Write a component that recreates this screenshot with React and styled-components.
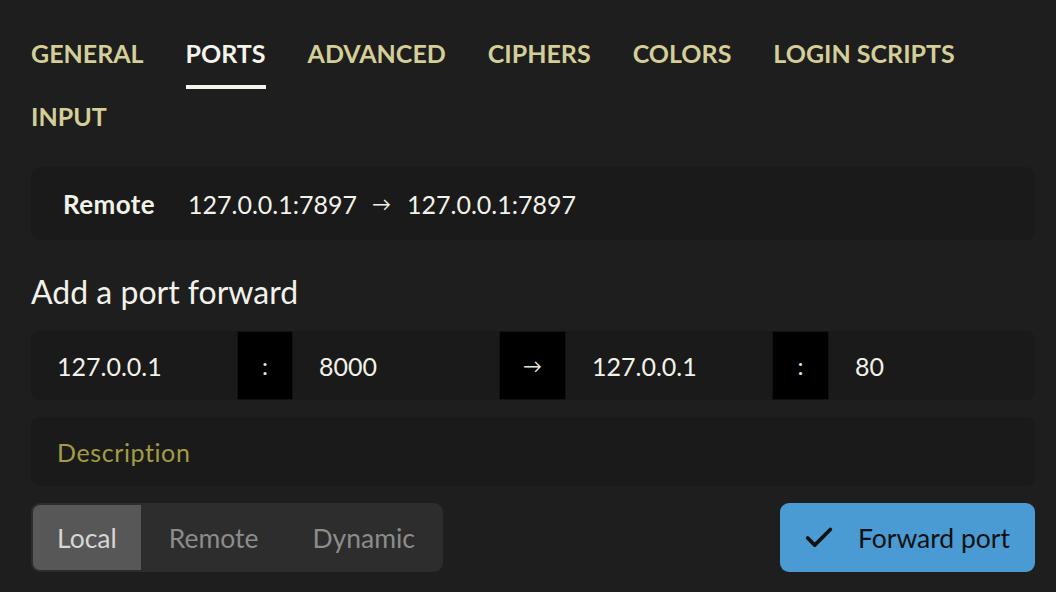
import React, { useState } from "react"
import styled, { createGlobalStyle } from "styled-components"
import { Check } from "lucide-react"

const GlobalStyle = createGlobalStyle`
  html, body {
    margin: 0;
    background: #1e1e1e;
  }
  body {
    font-family: Lato, "Liberation Sans", sans-serif;
    color: #f2f2ea;
  }
`

const StyledPage = styled.div`
  padding: 29px 21px 0 31px;
  box-sizing: border-box;
  width: 1056px;
  height: 592px;
  overflow: hidden;
`

const StyledTabs = styled.nav`
  display: flex;
  flex-wrap: wrap;
  column-gap: 42px;
  row-gap: 3px;
`

const StyledTab = styled.button`
  all: unset;
  cursor: pointer;
  padding: 8px 0 16px;
  font-size: 25px;
  line-height: 32px;
  font-weight: 700;
  color: ${(props) => (props.active ? "#f4f4ec" : "#d4ce98")};
  border-bottom: 4px solid
    ${(props) => (props.active ? "#f4f4ec" : "transparent")};
`

const StyledPanel = styled.div`
  display: flex;
  align-items: center;
  height: 73px;
  margin-top: 15px;
  padding: 0 32px;
  border-radius: 9px;
  background: #1a1a1a;
  font-size: 25px;
`

const StyledKind = styled.span`
  font-weight: 700;
  font-size: 26px;
  letter-spacing: 0.4px;
  margin-right: 33px;
`

const StyledArrow = styled.span`
  margin: 0 16px 0 15px;
  font-size: 19px;
`

const StyledHeading = styled.h2`
  margin: 33px 0 20px;
  font-size: 32px;
  font-weight: 400;
  line-height: 38px;
  color: #f2f2ea;
`

const StyledRow = styled.div`
  display: flex;
  height: 69px;
  border-radius: 9px;
  overflow: hidden;
  background: #1a1a1a;
  margin-bottom: 17px;
`

const StyledInput = styled.input`
  flex: 1;
  min-width: 0;
  border: none;
  outline: none;
  background: #1a1a1a;
  color: #f2f2ea;
  font: inherit;
  font-size: 25px;
  padding: 0 26px;

  &::placeholder {
    color: #a39c45;
    letter-spacing: 0.6px;
  }
`

const StyledJoint = styled.div`
  flex: 0 0 ${(props) => props.width}px;
  display: flex;
  align-items: center;
  justify-content: center;
  background: #000;
  box-shadow: inset 0 0 0 1px #121212;
  font-size: ${(props) => props.size}px;
  color: #e8e8e0;
`

const StyledFooter = styled.div`
  display: flex;
  justify-content: space-between;
`

const StyledSegments = styled.div`
  display: flex;
  height: 69px;
  padding: 2px;
  box-sizing: border-box;
  border-radius: 9px;
  background: #2d2d2d;
`

const StyledSegment = styled.button`
  all: unset;
  cursor: pointer;
  display: flex;
  align-items: center;
  padding: 0 ${(props) => props.pad}px;
  border-radius: 7px 0 0 7px;
  font-size: 26.5px;
  background: ${(props) => (props.active ? "#575757" : "transparent")};
  color: ${(props) => (props.active ? "#d6d6d6" : "#8c8c8c")};
`

const StyledSubmit = styled.button`
  all: unset;
  cursor: pointer;
  display: flex;
  align-items: center;
  gap: 22px;
  height: 69px;
  padding: 0 25px 0 22px;
  box-sizing: border-box;
  border-radius: 9px;
  background: #4a9ad4;
  color: #111;
  font-size: 26.5px;
`

const tabs = [
  "GENERAL",
  "PORTS",
  "ADVANCED",
  "CIPHERS",
  "COLORS",
  "LOGIN SCRIPTS",
  "INPUT",
]

const modes = [
  { name: "Local", pad: 24 },
  { name: "Remote", pad: 28 },
  { name: "Dynamic", pad: 26 },
]

const App = () => {
  const [tab, setTab] = useState("PORTS")
  const [mode, setMode] = useState("Local")

  return (
    <StyledPage>
      <GlobalStyle />
      <StyledTabs>
        {tabs.map((name) => (
          <StyledTab
            key={name}
            active={name === tab}
            onClick={() => setTab(name)}
          >
            {name}
          </StyledTab>
        ))}
      </StyledTabs>

      <StyledPanel>
        <StyledKind>Remote</StyledKind>
        127.0.0.1:7897
        <StyledArrow>→</StyledArrow>
        127.0.0.1:7897
      </StyledPanel>

      <StyledHeading>Add a port forward</StyledHeading>

      <StyledRow>
        <StyledInput defaultValue="127.0.0.1" />
        <StyledJoint width={56} size={24}>:</StyledJoint>
        <StyledInput defaultValue="8000" />
        <StyledJoint width={67} size={19}>→</StyledJoint>
        <StyledInput defaultValue="127.0.0.1" />
        <StyledJoint width={57} size={24}>:</StyledJoint>
        <StyledInput defaultValue="80" />
      </StyledRow>

      <StyledRow>
        <StyledInput placeholder="Description" />
      </StyledRow>

      <StyledFooter>
        <StyledSegments>
          {modes.map((m) => (
            <StyledSegment
              key={m.name}
              pad={m.pad}
              active={m.name === mode}
              onClick={() => setMode(m.name)}
            >
              {m.name}
            </StyledSegment>
          ))}
        </StyledSegments>
        <StyledSubmit>
          <Check size={34} strokeWidth={2.6} />
          Forward port
        </StyledSubmit>
      </StyledFooter>
    </StyledPage>
  )
}

export default App
